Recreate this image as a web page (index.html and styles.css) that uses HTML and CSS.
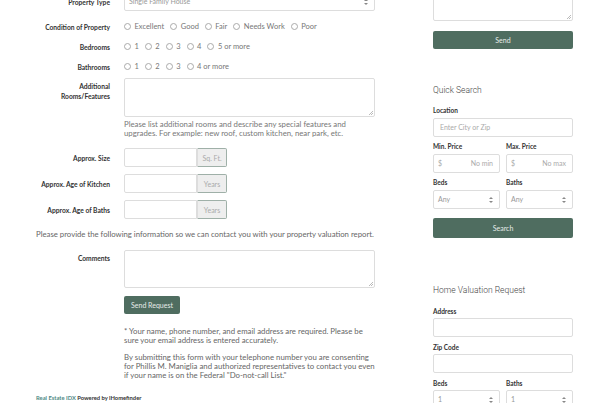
FILE: index.html
```html
<!DOCTYPE html>
<html>
<head>
<meta charset="UTF-8">
<link rel="stylesheet" href="styles.css">
</head>
<body>
<div class="page">

<div class="main">
<form class="valuation" action="#">
  <div class="row row-select">
    <label class="lbl">Property Type</label>
    <div class="field">
      <div class="select wide">Single Family House<span class="arrows"></span></div>
    </div>
  </div>

  <div class="row row-radio">
    <label class="lbl">Condition of Property</label>
    <div class="field radios">
      <span class="opt"><i class="dot"></i>Excellent</span>
      <span class="opt"><i class="dot"></i>Good</span>
      <span class="opt"><i class="dot"></i>Fair</span>
      <span class="opt"><i class="dot"></i>Needs Work</span>
      <span class="opt"><i class="dot"></i>Poor</span>
    </div>
  </div>
  <div class="row row-radio">
    <label class="lbl">Bedrooms</label>
    <div class="field radios">
      <span class="opt"><i class="dot"></i>1</span>
      <span class="opt"><i class="dot"></i>2</span>
      <span class="opt"><i class="dot"></i>3</span>
      <span class="opt"><i class="dot"></i>4</span>
      <span class="opt"><i class="dot"></i>5 or more</span>
    </div>
  </div>
  <div class="row row-radio last">
    <label class="lbl">Bathrooms</label>
    <div class="field radios">
      <span class="opt"><i class="dot"></i>1</span>
      <span class="opt"><i class="dot"></i>2</span>
      <span class="opt"><i class="dot"></i>3</span>
      <span class="opt"><i class="dot"></i>4 or more</span>
    </div>
  </div>

  <div class="row row-area">
    <label class="lbl lbl-top">Additional Rooms/Features</label>
    <div class="field">
      <div class="textarea"></div>
      <p class="help">Please list additional rooms and describe any special features and upgrades. For example: new roof, custom kitchen, near park, etc.</p>
    </div>
  </div>

  <div class="row row-input">
    <label class="lbl">Approx. Size</label>
    <div class="field group"><div class="input"></div><span class="addon">Sq. Ft.</span></div>
  </div>
  <div class="row row-input">
    <label class="lbl">Approx. Age of Kitchen</label>
    <div class="field group"><div class="input"></div><span class="addon">Years</span></div>
  </div>
  <div class="row row-input last">
    <label class="lbl">Approx. Age of Baths</label>
    <div class="field group"><div class="input"></div><span class="addon">Years</span></div>
  </div>

  <p class="intro">Please provide the following information so we can contact you with your property valuation report.</p>

  <div class="row row-comments">
    <label class="lbl lbl-top">Comments</label>
    <div class="field">
      <div class="textarea short"></div>
      <button type="button" class="btn btn-send">Send Request</button>
      <p class="note">* Your name, phone number, and email address are required. Please be sure your email address is entered accurately.</p>
      <p class="note">By submitting this form with your telephone number you are consenting for Phillis M. Maniglia and authorized representatives to contact you even if your name is on the Federal "Do-not-call List."</p>
    </div>
  </div>
</form>

<div class="credit"><span class="idx">Real Estate IDX</span> Powered by iHomefinder</div>
</div>

<div class="sidebar">
  <div class="textarea side-area"></div>
  <button type="button" class="btn btn-block btn-first">Send</button>

  <h3 class="side-title qs">Quick Search</h3>
  <div class="fg">
    <label class="slbl">Location</label>
    <div class="input ph">Enter City or Zip</div>
  </div>
  <div class="fg pair">
    <div class="half">
      <label class="slbl">Min. Price</label>
      <div class="input price"><span>$</span><span>No min</span></div>
    </div>
    <div class="half">
      <label class="slbl">Max. Price</label>
      <div class="input price"><span>$</span><span>No max</span></div>
    </div>
  </div>
  <div class="fg pair">
    <div class="half">
      <label class="slbl">Beds</label>
      <div class="select">Any<span class="arrows"></span></div>
    </div>
    <div class="half">
      <label class="slbl">Baths</label>
      <div class="select">Any<span class="arrows"></span></div>
    </div>
  </div>
  <button type="button" class="btn btn-block btn-search">Search</button>

  <h3 class="side-title hv">Home Valuation Request</h3>
  <div class="fg">
    <label class="slbl">Address</label>
    <div class="input"></div>
  </div>
  <div class="fg">
    <label class="slbl">Zip Code</label>
    <div class="input"></div>
  </div>
  <div class="fg pair">
    <div class="half">
      <label class="slbl">Beds</label>
      <div class="select">1<span class="arrows"></span></div>
    </div>
    <div class="half">
      <label class="slbl">Baths</label>
      <div class="select">1<span class="arrows"></span></div>
    </div>
  </div>
</div>

</div>
</body>
</html>
```

FILE: styles.css
```css
body{margin:0;background:#fff;font-family:'Lato','Open Sans',sans-serif;color:#333;overflow:hidden}
.page{display:flex;padding-left:36px;height:403px}
.main{width:339px;display:flex;flex-direction:column}
.main>*{flex:none}
.valuation{margin-top:-8px}
.row{display:flex;margin-bottom:9px}
.lbl{width:74px;flex:none;padding-right:14px;text-align:right;font-size:6.7px;font-weight:700;line-height:10px;color:#333;display:flex;align-items:center;justify-content:flex-end}
.lbl-top{align-items:flex-start;padding-top:3px}
.field{flex:1}
.row-select{margin-bottom:10px}
.row-radio{height:11px;margin-bottom:9px}
.row-radio.last{margin-bottom:6px}
.radios{display:flex;align-items:center;font-size:7.5px;color:#777}
.opt{display:flex;align-items:center;margin-right:6px}
.dot{display:inline-block;width:7px;height:7px;border:1px solid #aaa;border-radius:50%;margin-right:3.5px;box-sizing:border-box}
.select,.input,.textarea{box-sizing:border-box;border:1px solid #ddd;border-radius:2px;background:#fff}
.select{height:19px;position:relative;font-size:7px;color:#999;line-height:17px;padding-left:4px}
.arrows{position:absolute;right:6px;top:6px;width:0;height:0;border-left:2px solid transparent;border-right:2px solid transparent;border-bottom:2.5px solid #888}
.arrows:after{content:"";position:absolute;left:-2px;top:4px;border-left:2px solid transparent;border-right:2px solid transparent;border-top:2.5px solid #888}
.textarea{height:39px;position:relative}
.textarea:after{content:"";position:absolute;right:1px;bottom:1px;width:4px;height:4px;background:linear-gradient(135deg,transparent 45%,#bbb 45%,#bbb 55%,transparent 55%,transparent 70%,#bbb 70%,#bbb 80%,transparent 80%)}
.help{margin:3px 0 0;font-size:7.8px;line-height:9px;color:#777}
.row-area{margin-bottom:10px}
.group{display:flex;flex:none;width:103px}
.input{height:19px}
.group .input{width:73px;border-radius:2px 0 0 2px}
.addon{width:30px;height:19px;box-sizing:border-box;background:#eee;border:1px solid #9fb0a8;border-left:1px solid #ddd;border-radius:0 2px 2px 0;font-size:7px;color:#aaa;display:flex;align-items:center;justify-content:center}
.row-input{margin-bottom:7px}
.row-input.last{margin-bottom:10px}
.intro{margin:0 0 11px;font-size:7.75px;line-height:10px;color:#666;white-space:nowrap}
.textarea.short{height:38px}
.btn{border:0;border-radius:2px;background:#4f6d60;color:#e6ece8;font-family:'Lato',sans-serif;font-size:7px;cursor:pointer}
.btn-send{margin-top:8px;height:18px;padding:0 7px}
.note{margin:13px 0 0;font-size:7.8px;line-height:9px;color:#666}
.note+.note{margin-top:8px}
.credit{margin-top:auto;margin-bottom:2px;font-size:5.8px;font-weight:700;color:#333}
.idx{color:#4f8a86}
.sidebar{width:140px;margin-left:58px;flex:none}
.side-area{height:40px;margin-top:-19px}
.btn-block{width:100%;display:block}
.btn-first{margin-top:10px;height:18px}
.side-title{margin:34.5px 0 0;font-family:'Roboto',sans-serif;font-weight:300;font-size:8.5px;line-height:12px;color:#444}
.hv{margin-top:46.5px}
.fg{margin-bottom:5.5px}
.qs+.fg,.hv+.fg{margin-top:10.5px}
.slbl{display:block;font-size:6.5px;font-weight:700;line-height:9px;margin-bottom:2.5px;color:#333}
.ph{font-size:7px;color:#aaa;line-height:17px;padding-left:6px}
.pair{display:flex;gap:6px}
.half{flex:1}
.price{display:flex;justify-content:space-between;font-size:7px;color:#aaa;line-height:17px;padding:0 6px 0 4px}
.btn-search{margin-top:9px;height:20px}
```
